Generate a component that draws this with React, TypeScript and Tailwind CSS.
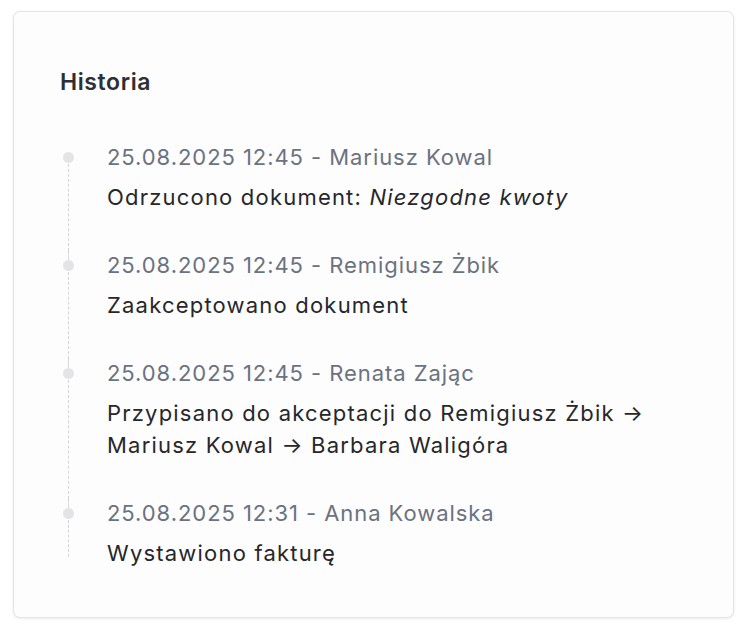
const items = [
  {
    meta: "25.08.2025 12:45 - Mariusz Kowal",
    body: (
      <>
        Odrzucono dokument: <em>Niezgodne kwoty</em>
      </>
    ),
  },
  { meta: "25.08.2025 12:45 - Remigiusz Żbik", body: <>Zaakceptowano dokument</> },
  {
    meta: "25.08.2025 12:45 - Renata Zając",
    body: <>Przypisano do akceptacji do Remigiusz Żbik → Mariusz Kowal → Barbara Waligóra</>,
  },
  { meta: "25.08.2025 12:31 - Anna Kowalska", body: <>Wystawiono fakturę</> },
]

export default function App() {
  return (
    <div className="min-h-[632px] w-[746px] bg-white pl-[13px] pt-[11px] font-['Inter',sans-serif]">
      <section className="h-[607px] w-[721px] rounded-[7px] border border-[#e4e4e7] bg-[#fdfdfe] px-[46px] pt-[56px] shadow-[0_1px_3px_rgba(0,0,0,0.08)]">
        <h2 className="text-[23px] leading-[28px] font-semibold tracking-[0.6px] text-[#2e2e33]">Historia</h2>
        <ul className="mt-[47px] ml-[8px]">
          {items.map((item, i) => {
            const last = i === items.length - 1
            return (
              <li key={i} className={`relative pl-[39px] ${last ? "" : "pb-[38px]"}`}>
                <span
                  className={`absolute left-0 top-[21px] border-l border-dashed border-[#d4d4d8] ${last ? "bottom-[12px]" : "bottom-0"}`}
                />
                {i > 0 && <span className="absolute left-0 top-0 h-[10px] border-l border-dashed border-[#d4d4d8]" />}
                <span className="absolute -left-[5px] top-[9px] size-[11px] rounded-full bg-[#e4e4e7]" />
                <p className="text-[22px] leading-[28px] tracking-[0.94px] text-[#6b7280]">{item.meta}</p>
                <p className="mt-[10px] text-[22px] leading-[32px] tracking-[1.2px] text-[#27272a]">{item.body}</p>
              </li>
            )
          })}
        </ul>
      </section>
    </div>
  )
}
